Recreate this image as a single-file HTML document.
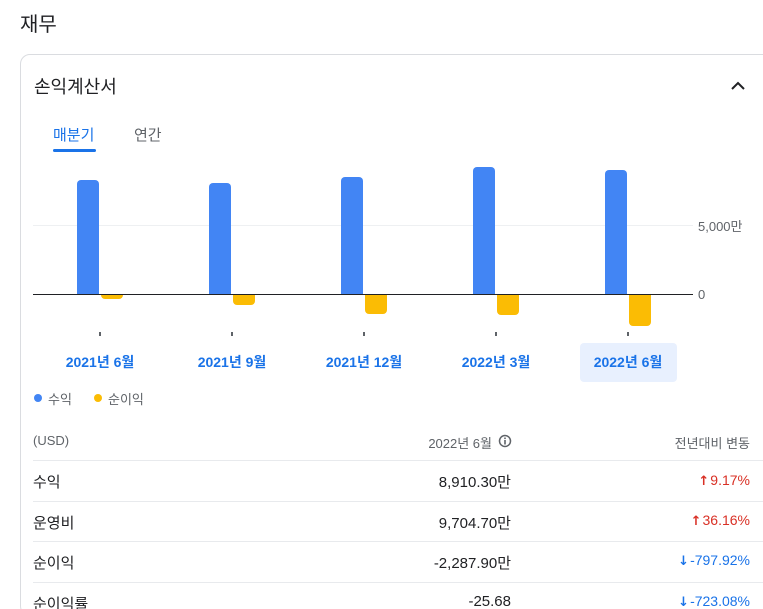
<!DOCTYPE html>
<html style="height:609px;overflow:hidden"><head><meta charset="utf-8"><style>
body{margin:0;width:763px;height:609px;overflow:hidden;background:#fff;font-family:"Liberation Sans","Noto Sans CJK KR",sans-serif;color:#202124;position:relative}
.a{position:absolute;white-space:nowrap}
.card{position:absolute;left:20px;top:54px;width:770px;height:560px;border:1px solid #dadce0;border-radius:10px}
.bb{position:absolute;background:#4285f4;width:22px;border-radius:4px 4px 0 0}
.gb{position:absolute;background:#fbbc04;width:22px;top:295px;border-radius:0 0 4px 4px}
.dl{position:absolute;top:352px;width:100px;text-align:center;color:#1a73e8;font-size:14px;font-weight:bold}
.tk{position:absolute;top:332px;width:2px;height:4px;background:#5f6368}
.hr{position:absolute;left:33px;width:730px;height:1px;background:#e8eaed}
.r{font-size:15px}
.v{right:252px;text-align:right;font-size:15px}
.c{right:13px;text-align:right;font-size:14px}
.ar{font-family:"DejaVu Sans",sans-serif;font-weight:bold;font-size:13px;margin-right:1px}
</style></head><body>
<div class="a" style="left:20px;top:8px;font-size:20px">재무</div>
<div class="card"></div>
<div class="a" style="left:34px;top:73px;font-size:18px">손익계산서</div>
<svg class="a" style="left:730px;top:80px" width="16" height="12"><path d="M2 9 L8 3 L14 9" fill="none" stroke="#202124" stroke-width="2"/></svg>
<div class="a" style="left:53px;top:124px;font-size:15px;color:#1a73e8">매분기</div>
<div class="a" style="left:53px;top:149px;width:43px;height:3px;background:#1a73e8;border-radius:2px"></div>
<div class="a" style="left:134px;top:124px;font-size:15px;color:#5f6368">연간</div>
<div class="a" style="left:33px;top:225px;width:660px;height:1px;background:#eef0f2"></div>
<div class="bb" style="left:77px;top:180px;height:114px"></div>
<div class="bb" style="left:209px;top:183px;height:111px"></div>
<div class="bb" style="left:341px;top:177px;height:117px"></div>
<div class="bb" style="left:473px;top:167px;height:127px"></div>
<div class="bb" style="left:605px;top:170px;height:124px"></div>
<div class="gb" style="left:101px;height:4px"></div>
<div class="gb" style="left:233px;height:10px"></div>
<div class="gb" style="left:365px;height:19px"></div>
<div class="gb" style="left:497px;height:20px"></div>
<div class="gb" style="left:629px;height:31px"></div>
<div class="a" style="left:33px;top:294px;width:660px;height:1px;background:#202124"></div>
<div class="a" style="left:698px;top:216px;font-size:13px;color:#5f6368">5,000만</div>
<div class="a" style="left:698px;top:287px;font-size:13px;color:#5f6368">0</div>
<div class="tk" style="left:99px"></div><div class="tk" style="left:231px"></div><div class="tk" style="left:363px"></div><div class="tk" style="left:495px"></div><div class="tk" style="left:627px"></div>
<div class="a" style="left:580px;top:343px;width:97px;height:39px;background:#e8f0fe;border-radius:4px"></div>
<div class="dl" style="left:50px">2021년 6월</div>
<div class="dl" style="left:182px">2021년 9월</div>
<div class="dl" style="left:314px">2021년 12월</div>
<div class="dl" style="left:446px">2022년 3월</div>
<div class="dl" style="left:578px">2022년 6월</div>
<div class="a" style="left:34px;top:394px;width:8px;height:8px;border-radius:50%;background:#4285f4"></div>
<div class="a" style="left:48px;top:389px;font-size:13px;color:#5f6368">수익</div>
<div class="a" style="left:94px;top:394px;width:8px;height:8px;border-radius:50%;background:#fbbc04"></div>
<div class="a" style="left:108px;top:389px;font-size:13px;color:#5f6368">순이익</div>
<div class="a" style="left:33px;top:433px;font-size:13px;color:#5f6368">(USD)</div>
<div class="a" style="right:271px;top:433px;font-size:13px;color:#5f6368">2022년 6월</div>
<svg class="a" style="left:498px;top:434px" width="14" height="14"><circle cx="7" cy="7" r="5.5" fill="none" stroke="#5f6368" stroke-width="1.5"/><rect x="6.2" y="6" width="1.6" height="4.5" fill="#5f6368"/><rect x="6.2" y="3.5" width="1.6" height="1.6" fill="#5f6368"/></svg>
<div class="a c" style="top:433px;font-size:13px;color:#5f6368">전년대비 변동</div>
<div class="hr" style="top:460px"></div><div class="hr" style="top:501px"></div><div class="hr" style="top:541px"></div><div class="hr" style="top:582px"></div>
<div class="a r" style="left:33px;top:471px">수익</div><div class="a v" style="top:471px">8,910.30만</div><div class="a c" style="top:472px;color:#d93025"><span class="ar">↑</span>9.17%</div>
<div class="a r" style="left:33px;top:512px">운영비</div><div class="a v" style="top:512px">9,704.70만</div><div class="a c" style="top:512px;color:#d93025"><span class="ar">↑</span>36.16%</div>
<div class="a r" style="left:33px;top:552px">순이익</div><div class="a v" style="top:552px">-2,287.90만</div><div class="a c" style="top:552px;color:#1a73e8"><span class="ar">↓</span>-797.92%</div>
<div class="a r" style="left:33px;top:593px">순이익률</div><div class="a v" style="top:593px">-25.68</div><div class="a c" style="top:593px;color:#1a73e8"><span class="ar">↓</span>-723.08%</div>
</body></html>
